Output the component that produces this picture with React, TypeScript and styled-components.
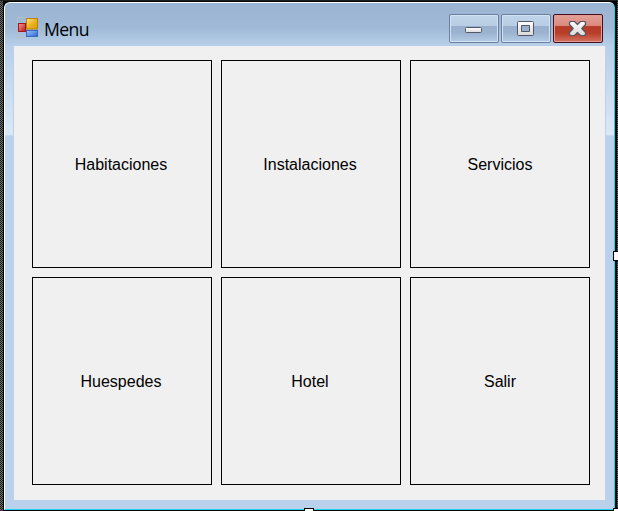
import React from 'react';
import styled, { createGlobalStyle } from 'styled-components';

const GlobalStyle = createGlobalStyle`
  *, *::before, *::after { box-sizing: border-box; }
  body { margin: 0; overflow: hidden; background: #1b1b1b; }
`;

const DesignSurface = styled.main`
  position: relative;
  width: 618px;
  height: 511px;
  padding: 0 1px 0 3px;
  overflow: hidden;
  background: repeating-conic-gradient(#1c1c1c 0% 25%, #6c6c68 0% 50%) 0 0 / 2px 2px;
  border-top: 1px solid #1e1e1e;
`;

const Shadow = styled.div`
  height: 510px;
  padding: 1px 2px 1px 1px;
  background: #050505;
`;

const WindowFrame = styled.section`
  display: flex;
  flex-direction: column;
  width: 611px;
  height: 508px;
  border: 1px solid #1fd0ec;
  border-top-color: #fff;
  border-left-color: #fff;
  border-radius: 6px 6px 0 0;
  background: #b9d1ea;
  overflow: hidden;
`;

const TitleBar = styled.header`
  display: flex;
  flex: 0 0 43px;
  height: 43px;
  padding: 11px 11px 0 12px;
  background: linear-gradient(#9ab4d1 0, #9fb9d6 24px, #b7cfe9 100%);
`;

const AppIcon = styled.svg`
  flex: none;
  width: 22px;
  height: 22px;
  margin-top: 3px;
`;

const Title = styled.h1`
  flex: 1;
  margin: 0 0 0 5px;
  font: 400 17.6px/30px "Open Sans", "Noto Sans", sans-serif;
  letter-spacing: -0.6px;
  color: #000;
`;

const Controls = styled.div`
  display: flex;
  gap: 2px;
`;

const ControlButton = styled.button<{ $close?: boolean }>`
  width: 50px;
  height: 29px;
  padding: 0;
  border: 1px solid ${p => (p.$close ? '#43101c' : '#6c7f9d')};
  border-radius: 2px;
  box-shadow: inset 0 0 0 1px ${p => (p.$close ? '#e59b91' : '#d3e2f2')};
  background: ${p => p.$close
    ? 'linear-gradient(#e3a198 0, #d9887c 11px, #b83d28 11px, #b83d28 18px, #d27261 100%)'
    : 'linear-gradient(#bfd3e9 0, #b9cde4 11px, #98b0cd 11px, #9bb3cf 18px, #b5cce5 100%)'};
  svg { display: block; width: 48px; height: 27px; }
`;

const Body = styled.div`
  flex: 1;
  padding: 0 9px 9px;
  background:
    linear-gradient(#b7cfe9, #dce8f5) 0 0 / 8px 89px no-repeat,
    linear-gradient(#c5daef, #c5daef) 0 89px / 9px 1px no-repeat,
    linear-gradient(#b7cfe9, #dce8f5) 601px 0 / 8px 89px no-repeat,
    linear-gradient(#c5daef, #c5daef) 601px 89px / 8px 1px no-repeat,
    #b9d1ea;
`;

const MenuGrid = styled.nav`
  display: grid;
  grid-template-columns: repeat(3, 180px);
  grid-template-rows: repeat(2, 208px);
  gap: 9px;
  height: 454px;
  padding: 14px 15px 15px 18px;
  background: #f0f0f0;
`;

const MenuButton = styled.button`
  padding: 2px 2px 0 0;
  border: 1px solid #000;
  background: #f0f0f0;
  font: 16px "Liberation Sans", Arial, sans-serif;
  color: #000;
  &:nth-child(3n) { padding-right: 0; }
`;

const ResizeHandle = styled.i<{ $side: 'right' | 'bottom' | 'corner' }>`
  position: absolute;
  width: 10px;
  height: 10px;
  border: 1px solid #000;
  background: #fff;
  left: ${p => (p.$side === 'bottom' ? 304 : 613)}px;
  top: ${p => (p.$side === 'right' ? 250 : 507)}px;
`;

const items = ['Habitaciones', 'Instalaciones', 'Servicios', 'Huespedes', 'Hotel', 'Salir'];

function FormIcon() {
  return (
    <AppIcon viewBox="0 0 22 22">
      <defs>
        <linearGradient id="gold" x1="0" y1="0" x2="1" y2="1">
          <stop stopColor="#ffe58a" /><stop offset=".5" stopColor="#ecb321" /><stop offset="1" stopColor="#d79a00" />
        </linearGradient>
        <linearGradient id="red" x1="0" y1="0" x2="1" y2="1">
          <stop stopColor="#f3a09a" /><stop offset="1" stopColor="#b81313" />
        </linearGradient>
        <linearGradient id="blue" x1="0" y1="0" x2="1" y2="1">
          <stop stopColor="#9cc4ff" /><stop offset="1" stopColor="#2d63d3" />
        </linearGradient>
      </defs>
      <path d="M9 .5H.5V6M.5 14V20.5H9" fill="none" stroke="#b7bdc4" />
      <rect x="9.5" y="1.5" width="11" height="10.5" fill="url(#gold)" stroke="#b98205" />
      <rect x="1.5" y="6.5" width="7" height="8" fill="url(#red)" stroke="#a01818" />
      <rect x="9.5" y="13.5" width="11" height="6" fill="url(#blue)" stroke="#3968b8" />
    </AppIcon>
  );
}

const glyphs = {
  minimize: 'M16.5 12.5H30.5Q31.5 12.5 31.5 13.5V16.5Q31.5 17.5 30.5 17.5H16.5Q15.5 17.5 15.5 16.5V13.5Q15.5 12.5 16.5 12.5Z',
  maximize: 'M16.5 6.5H30.5Q31.5 6.5 31.5 7.5V19.5Q31.5 20.5 30.5 20.5H16.5Q15.5 20.5 15.5 19.5V7.5Q15.5 6.5 16.5 6.5ZM19.5 10.5V16.5H27.5V10.5Z',
  close: 'M16.5 6.5H20.5L23.5 9.5L26.5 6.5H30.5L31.5 7.5V9.5L27.8 13.5L31.5 17.5V19.5L30.5 20.5H26.5L23.5 17.5L20.5 20.5H16.5L15.5 19.5V17.5L19.2 13.5L15.5 9.5V7.5Z',
};

function ControlGlyph({ kind }: { kind: keyof typeof glyphs }) {
  return (
    <svg viewBox="0 0 48 27">
      <defs>
        <linearGradient id={kind} x1="0" y1="0" x2="0" y2="1">
          <stop stopColor="#fff" /><stop offset="1" stopColor="#d9d9d9" />
        </linearGradient>
      </defs>
      <path d={glyphs[kind]} fillRule="evenodd" fill={`url(#${kind})`}
        stroke="#535666" strokeWidth={kind === 'close' ? 1.2 : 1} strokeLinejoin="round" />
    </svg>
  );
}

export default function App() {
  return (
    <>
      <GlobalStyle />
      <DesignSurface>
        <Shadow>
          <WindowFrame>
            <TitleBar>
              <FormIcon />
              <Title>Menu</Title>
              <Controls>
                <ControlButton aria-label="Minimize"><ControlGlyph kind="minimize" /></ControlButton>
                <ControlButton aria-label="Maximize"><ControlGlyph kind="maximize" /></ControlButton>
                <ControlButton aria-label="Close" $close><ControlGlyph kind="close" /></ControlButton>
              </Controls>
            </TitleBar>
            <Body>
              <MenuGrid>
                {items.map(item => <MenuButton key={item}>{item}</MenuButton>)}
              </MenuGrid>
            </Body>
          </WindowFrame>
        </Shadow>
        <ResizeHandle $side="right" />
        <ResizeHandle $side="bottom" />
        <ResizeHandle $side="corner" />
      </DesignSurface>
    </>
  );
}
